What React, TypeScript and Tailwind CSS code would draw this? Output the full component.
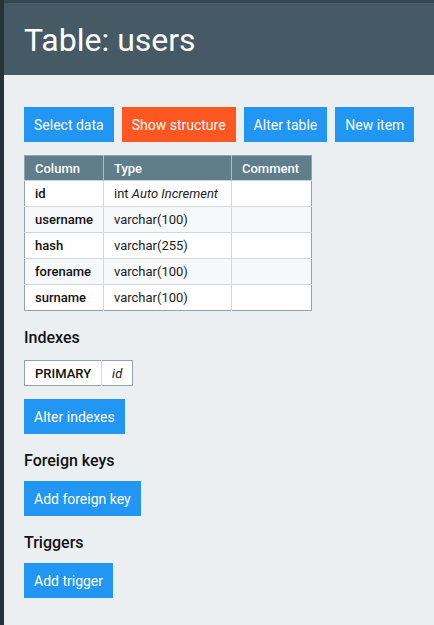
import React from 'react';

const FONT = { fontFamily: 'Roboto, "Liberation Sans", sans-serif' };

const ACTIONS = [
  { label: 'Select data', active: false },
  { label: 'Show structure', active: true },
  { label: 'Alter table', active: false },
  { label: 'New item', active: false },
];

const COLUMNS = [
  { name: 'id', type: 'int', extra: 'Auto Increment' },
  { name: 'username', type: 'varchar(100)' },
  { name: 'hash', type: 'varchar(255)' },
  { name: 'forename', type: 'varchar(100)' },
  { name: 'surname', type: 'varchar(100)' },
];

function ActionButton({ label, active }: { label: string; active?: boolean }) {
  return (
    <button
      className={
        'h-[35px] shrink-0 whitespace-nowrap px-[10px] text-[14px] leading-none text-white ' +
        (active ? 'bg-[#ff5722]' : 'bg-[#2196f3]')
      }
    >
      {label}
    </button>
  );
}

function Section({ title }: { title: string }) {
  return <h2 className="text-[16px] leading-[20px] font-medium text-[#111]">{title}</h2>;
}

export default function App() {
  return (
    <div className="flex min-h-[625px] bg-[#eceff1]" style={FONT}>
      <div className="w-1 shrink-0 bg-[#263238]" />
      <div className="flex-1 min-w-0 flex flex-col">
        <div className="h-[3px] bg-[#37474f]" />
        <div className="h-[72px] flex items-center px-5 bg-[#455a64]">
          <h1 className="text-[32px] leading-none text-white pt-[1px]">Table: users</h1>
        </div>

        <div className="px-5 pt-8 pb-6 flex flex-col">
          {/* actions */}
          <div className="flex gap-2">
            {ACTIONS.map(a => (
              <ActionButton key={a.label} label={a.label} active={a.active} />
            ))}
          </div>

          {/* structure */}
          <table className="mt-[13px] w-[288px] table-fixed border-collapse border border-[#90a4ae] text-[13px] leading-none">
            <colgroup>
              <col className="w-[79px]" />
              <col className="w-[128px]" />
              <col className="w-[80px]" />
            </colgroup>
            <thead>
              <tr className="h-[25px] bg-[#607d8b] text-white">
                <th className="px-[10px] text-left font-medium border-r border-[#b0bec5]">Column</th>
                <th className="px-[10px] text-left font-medium border-r border-[#b0bec5]">Type</th>
                <th className="px-[10px] text-left font-medium">Comment</th>
              </tr>
            </thead>
            <tbody>
              {COLUMNS.map((c, i) => (
                <tr key={c.name} className={'h-[26px] ' + (i % 2 ? 'bg-[#f6f8f9]' : 'bg-white')}>
                  <td className="px-[10px] font-medium text-[#111] border-t border-r border-[#cfd8dc]">{c.name}</td>
                  <td className="px-[10px] text-[#222] border-t border-r border-[#cfd8dc] whitespace-nowrap">
                    {c.type}
                    {c.extra && <> <i>{c.extra}</i></>}
                  </td>
                  <td className="border-t border-[#cfd8dc]" />
                </tr>
              ))}
            </tbody>
          </table>

          <div className="mt-[17px]">
            <Section title="Indexes" />
          </div>
          <table className="mt-3 self-start border-collapse border border-[#90a4ae] bg-white text-[13px] leading-none">
            <tbody>
              <tr className="h-[25px]">
                <td className="w-[77px] px-[10px] font-medium text-[#111] border-r border-[#cfd8dc]">PRIMARY</td>
                <td className="px-[10px] italic text-[#222]">id</td>
              </tr>
            </tbody>
          </table>
          <div className="mt-[13px]">
            <ActionButton label="Alter indexes" />
          </div>

          <div className="mt-[17px]">
            <Section title="Foreign keys" />
          </div>
          <div className="mt-[10px]">
            <ActionButton label="Add foreign key" />
          </div>

          <div className="mt-[17px]">
            <Section title="Triggers" />
          </div>
          <div className="mt-[10px]">
            <ActionButton label="Add trigger" />
          </div>
        </div>
      </div>
    </div>
  );
}
